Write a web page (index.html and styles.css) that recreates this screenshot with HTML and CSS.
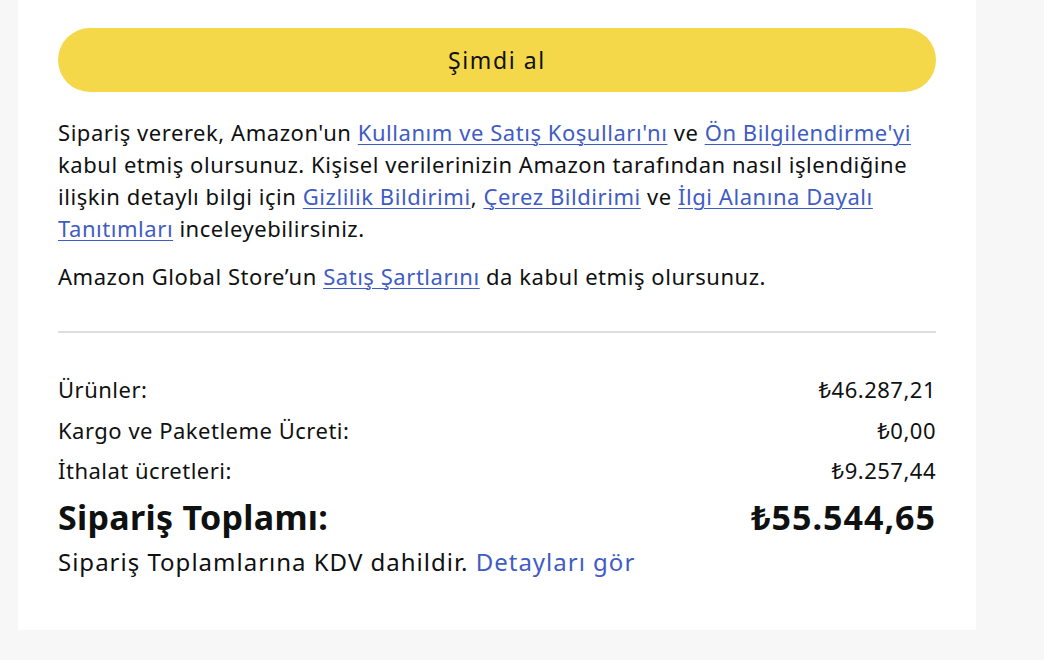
FILE: index.html
```html
<!DOCTYPE html>
<html lang="tr">
<head>
<meta charset="utf-8">
<link rel="stylesheet" href="styles.css">
</head>
<body>
<div class="card">
  <button class="buy">Şimdi al</button>
  <p class="legal">Sipariş vererek, Amazon'un <a href="#">Kullanım ve Satış Koşulları'nı</a> ve <a href="#">Ön Bilgilendirme'yi</a><br>kabul etmiş olursunuz. Kişisel verilerinizin Amazon tarafından nasıl işlendiğine<br>ilişkin detaylı bilgi için <a href="#">Gizlilik Bildirimi</a>, <a href="#">Çerez Bildirimi</a> ve <a href="#">İlgi Alanına Dayalı<br>Tanıtımları</a> inceleyebilirsiniz.</p>
  <p class="legal second">Amazon Global Store’un <a href="#">Satış Şartlarını</a> da kabul etmiş olursunuz.</p>
  <hr class="divider">
  <div class="rows">
    <div class="row"><span>Ürünler:</span><span>₺46.287,21</span></div>
    <div class="row"><span>Kargo ve Paketleme Ücreti:</span><span>₺0,00</span></div>
    <div class="row"><span>İthalat ücretleri:</span><span>₺9.257,44</span></div>
  </div>
  <div class="total"><span class="total-label">Sipariş Toplamı:</span><span class="total-value">₺55.544,65</span></div>
  <p class="vat">Sipariş Toplamlarına KDV dahildir. <a href="#">Detayları gör</a></p>
</div>
</body>
</html>
```
FILE: styles.css
```css
html, body {
  margin: 0;
  padding: 0;
  background: #f7f7f7;
  font-family: "Noto Sans", "Open Sans", sans-serif;
  color: #0f1111;
}
.card {
  margin-left: 18px;
  width: 958px;
  height: 630px;
  background: #fff;
  padding: 28px 40px 0 40px;
  box-sizing: border-box;
}
.buy {
  display: block;
  width: 100%;
  height: 64px;
  border: none;
  border-radius: 32px;
  background: #f5d84a;
  font-family: "Noto Sans", sans-serif;
  font-size: 23px;
  letter-spacing: 1.6px;
  color: #0f1111;
  padding: 0;
}
.legal {
  margin: 24px 0 0 0;
  font-size: 22px;
  letter-spacing: 0.55px;
  line-height: 32px;
  white-space: nowrap;
}
.legal.second {
  margin-top: 16px;
}
a {
  color: #3f5cc4;
  text-decoration: underline;
  text-underline-offset: 3px;
  text-decoration-thickness: 1px;
}
.divider {
  border: none;
  border-top: 2px solid #dedede;
  margin: 39px 0 0 0;
}
.rows {
  margin-top: 36px;
  font-size: 22px;
  letter-spacing: 0.5px;
}
.row {
  display: flex;
  justify-content: space-between;
  height: 40.5px;
  line-height: 40px;
}
.total {
  display: flex;
  justify-content: space-between;
  font-size: 34px;
  line-height: 40px;
  font-weight: bold;
  margin-top: 6px;
}
.total-label {
  letter-spacing: 0.3px;
}
.total-value {
  letter-spacing: 1px;
}
.vat {
  margin: 9px 0 0 0;
  font-size: 24px;
  letter-spacing: 1px;
  line-height: 32px;
}
.vat a {
  text-decoration: none;
}
```
